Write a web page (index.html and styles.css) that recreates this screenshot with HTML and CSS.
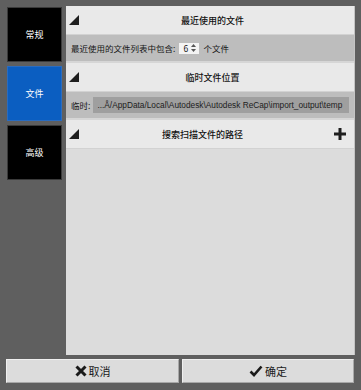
FILE: index.html
```html
<!DOCTYPE html>
<html lang="zh-CN">
<head>
<meta charset="utf-8">
<link rel="stylesheet" href="styles.css">
</head>
<body>
<div class="app">
  <div class="top">
    <nav class="tabs">
      <div class="tab">常规</div>
      <div class="tab active">文件</div>
      <div class="tab">高级</div>
    </nav>
    <main class="panel">
      <div class="head">
        <svg class="tri" width="10" height="10" viewBox="0 0 10 10"><polygon points="10,0 10,10 0,10" fill="#1e1e1e"/></svg>
        <span class="title">最近使用的文件</span>
      </div>
      <div class="row">
        <span>最近使用的文件列表中包含:</span>
        <span class="spin"><span>6</span><svg width="5" height="8" viewBox="0 0 5 8"><polygon points="2.5,0 5,3 0,3" fill="#555"/><polygon points="0,5 5,5 2.5,8" fill="#555"/></svg></span>
        <span>个文件</span>
      </div>
      <div class="head">
        <svg class="tri" width="10" height="10" viewBox="0 0 10 10"><polygon points="10,0 10,10 0,10" fill="#1e1e1e"/></svg>
        <span class="title">临时文件位置</span>
      </div>
      <div class="row">
        <span>临时:</span>
        <span class="path">...Å/AppData/Local\Autodesk\Autodesk ReCap\import_output\temp</span>
      </div>
      <div class="head">
        <svg class="tri" width="10" height="10" viewBox="0 0 10 10"><polygon points="10,0 10,10 0,10" fill="#1e1e1e"/></svg>
        <span class="title">搜索扫描文件的路径</span>
        <svg class="plus" width="12" height="12" viewBox="0 0 12 12"><rect x="4.5" y="0" width="3" height="12" fill="#1e1e1e"/><rect x="0" y="4.5" width="12" height="3" fill="#1e1e1e"/></svg>
      </div>
    </main>
  </div>
  <div class="buttons">
    <button class="btn"><svg width="12" height="12" viewBox="0 0 12 12"><path d="M1.5 1.5 L10.5 10.5 M10.5 1.5 L1.5 10.5" stroke="#1a1a1a" stroke-width="3"/></svg><span>取消</span></button>
    <button class="btn"><svg width="14" height="12" viewBox="0 0 14 12"><path d="M1.5 6.5 L5 10 L12.5 1.5" stroke="#1a1a1a" stroke-width="2.6" fill="none"/></svg><span>确定</span></button>
  </div>
</div>
</body>
</html>
```

FILE: styles.css
```css
html, body {
  margin: 0;
  padding: 0;
}
body {
  width: 361px;
  height: 390px;
  background: #5f5f5f;
  font-family: "Noto Sans CJK SC", "Liberation Sans", sans-serif;
  overflow: hidden;
}
.app {
  padding: 6px 6px 0 6px;
  display: flex;
  flex-direction: column;
}
.top {
  display: flex;
  gap: 4px;
}
.tabs {
  display: flex;
  flex-direction: column;
  gap: 4px;
  margin-top: 1px;
  margin-left: 1px;
}
.tab {
  width: 53px;
  height: 53px;
  background: #000;
  border: 1px solid #3a3a3a;
  color: #fff;
  font-size: 9px;
  display: flex;
  align-items: center;
  justify-content: center;
}
.tab.active {
  background: #0b5ec1;
  border-color: #2a6cc0;
}
.panel {
  width: 288px;
  height: 349px;
  background: #dcdcdc;
  border-right: 1px solid #c4c4c4;
  display: flex;
  flex-direction: column;
}
.head {
  height: 28px;
  background: #e9e9e9;
  border-bottom: 1px solid #d2d2d2;
  display: flex;
  align-items: center;
  padding-left: 3px;
  padding-right: 8px;
  color: #111;
  font-size: 9px;
  font-weight: 500;
}
.tri {
  flex: none;
}
.title {
  flex: 1;
  text-align: center;
}
.plus {
  flex: none;
  margin-left: 8px;
}
.row {
  height: 26px;
  background: #bdbdbd;
  border-bottom: 2px solid #d6d6d6;
  display: flex;
  align-items: center;
  padding-left: 5px;
  font-size: 8.5px;
  color: #161616;
  gap: 3px;
}
.spin {
  width: 20px;
  height: 11px;
  background: #f4f4f4;
  display: flex;
  align-items: center;
  justify-content: space-between;
  padding: 0 3px 0 4px;
  box-sizing: border-box;
  margin: 0 1px;
}
.path {
  flex: 1;
  margin-right: 5px;
  height: 16px;
  background: #9f9f9f;
  display: flex;
  align-items: center;
  padding-left: 4px;
  font-family: "Liberation Sans", sans-serif;
  font-size: 8.3px;
  color: #1c1c1c;
  white-space: nowrap;
  overflow: hidden;
}
.buttons {
  display: flex;
  gap: 3px;
  margin-top: 4px;
}
.btn {
  width: 173px;
  height: 24px;
  background: #dcdcdc;
  border: 1px solid #efefef;
  border-right-color: #a8a8a8;
  border-bottom-color: #a8a8a8;
  display: flex;
  align-items: center;
  justify-content: center;
  gap: 2px;
  padding: 0;
  font-family: "Noto Sans CJK SC", sans-serif;
  font-size: 11px;
  color: #1a1a1a;
}
.btn + .btn {
  width: 172px;
}
```
